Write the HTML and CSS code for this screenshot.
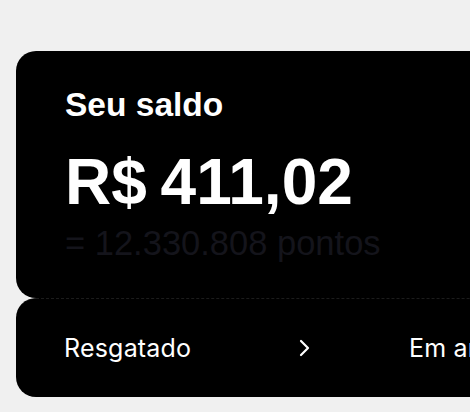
FILE: index.html
```html
<!DOCTYPE html>
<html lang="pt-BR">
<head>
    <meta charset="UTF-8">
    <meta name="viewport" content="width=device-width, initial-scale=1.0">
    <title>Seu saldo</title>
    <link rel="stylesheet" href="styles.css">
</head>
<body>

    <!-- Cartão do saldo -->
    <div class="saldo">
        <h2 class="saldo-titulo">Seu saldo</h2>
        <p class="saldo-valor">R$ 411,02</p>
        <p class="saldo-pontos">= 12.330.808 pontos</p>
    </div>

    <!-- Resumo de resgates -->
    <div class="resumo">
        <div class="resumo-item">
            <span>Resgatado</span>
            <svg class="seta" width="12" height="18" viewBox="0 0 12 18">
                <polyline points="2,2 9,9 2,16" fill="none" stroke="#fff" stroke-width="2.2" stroke-linecap="round" stroke-linejoin="round"/>
            </svg>
        </div>
        <div class="resumo-item">
            <span>Em andamento</span>
        </div>
    </div>

</body>
</html>
```

FILE: styles.css
```css
body {
    margin: 0;
    padding: 51px 0 0 16px;
    background-color: #f0f0f0;
    overflow: hidden;
    font-family: "Liberation Sans", Arial, sans-serif;
}

/* Cartão principal */
.saldo {
    width: 640px;
    height: 247px;
    box-sizing: border-box;
    padding: 34px 0 0 49px;
    background-color: #000;
    border-radius: 20px;
    color: #fff;
}

.saldo-titulo {
    margin: 0;
    font-size: 33.5px;
    line-height: 40px;
    font-weight: bold;
}

.saldo-valor {
    margin: 21px 0 0 0;
    font-size: 64px;
    line-height: 72px;
    font-weight: bold;
    word-spacing: -4px;
}

.saldo-pontos {
    margin: 5px 0 0 0;
    font-size: 34.5px;
    line-height: 40px;
    color: #14141b;
}

/* Bloco de resgates */
.resumo {
    width: 640px;
    height: 99px;
    box-sizing: border-box;
    padding: 0 0 0 48px;
    background-color: #000;
    border-top: 1px dashed #1c1c1c;
    border-radius: 20px;
    display: flex;
    align-items: center;
    color: #fff;
    font-family: Inter, "Noto Sans", sans-serif;
    font-size: 25px;
    letter-spacing: 0.2px;
}

.resumo-item {
    display: flex;
    align-items: center;
    justify-content: space-between;
    width: 247px;
    margin-right: 98px;
    flex-shrink: 0;
    white-space: nowrap;
}

.seta {
    display: block;
}
```
